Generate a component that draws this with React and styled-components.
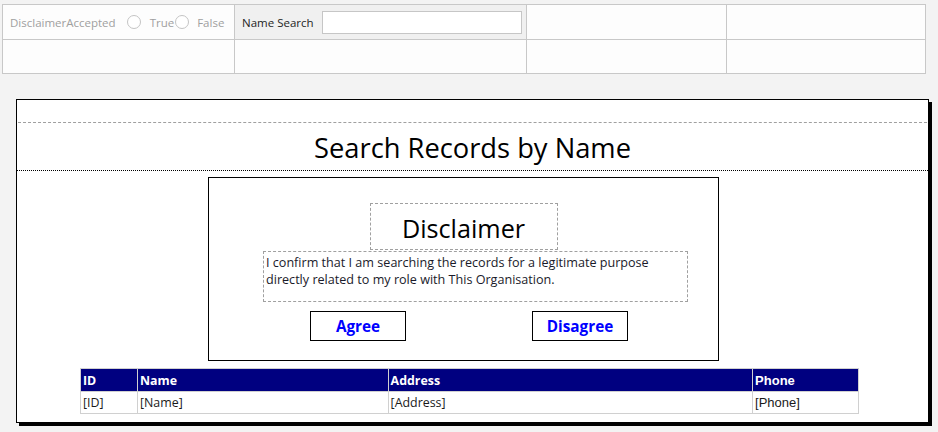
import React from 'react';
import styled, { createGlobalStyle } from 'styled-components';

const ui = '"Open Sans", "Noto Sans", sans-serif';
const arial = '"Liberation Sans", Arial, sans-serif';

const GlobalStyle = createGlobalStyle`
  html, body {
    margin: 0;
    padding: 0;
    background: #f3f3f3;
    font-family: ${ui};
  }
`;

const Page = styled.div`
  width: 938px;
  height: 432px;
  overflow: hidden;
  box-sizing: border-box;
  padding: 4px 0 0 2px;
`;

const FilterGrid = styled.div`
  display: grid;
  grid-template-columns: 232px 292px 200px 199px;
  grid-template-rows: 35px 34px;
  width: 924px;
  box-sizing: border-box;
  border-top: 1px solid #c8c8c8;
  border-left: 1px solid #c8c8c8;
  background: #fdfdfd;
`;

const Cell = styled.div`
  display: flex;
  align-items: center;
  box-sizing: border-box;
  white-space: nowrap;
  border-right: 1px solid #c8c8c8;
  border-bottom: 1px solid #c8c8c8;
  background: ${p => (p.$shaded ? '#f0f0f0' : '#fdfdfd')};
  padding: 0 7px;
  font-size: 11.5px;
  color: ${p => (p.$muted ? '#a0a0a0' : '#1e1e1e')};
`;

const RadioGroup = styled.div`
  display: flex;
  align-items: center;
  margin-left: 11px;
`;

const Radio = styled.span`
  display: inline-block;
  flex-shrink: 0;
  width: 12px;
  height: 12px;
  border: 1px solid #c4c4c4;
  border-radius: 50%;
  background: #fff;
  margin-right: ${p => p.$gap || 9}px;
`;

const RadioLabel = styled.span`
  margin-right: 1px;
`;

const SearchInput = styled.input`
  flex-shrink: 0;
  width: 200px;
  height: 23px;
  box-sizing: border-box;
  margin-left: 8px;
  border: 1px solid #c6c6c6;
  background: #fff;
  outline: none;
`;

const Panel = styled.div`
  margin: 25px 0 0 14px;
  width: 913px;
  height: 324px;
  box-sizing: border-box;
  background: #fff;
  border: 1px solid #000;
  box-shadow: 3px 3px 0 #000;
`;

const HeaderSpacer = styled.div`
  height: 22px;
  margin: 0 1px;
  border-bottom: 1px dashed #a0a0a0;
`;

const Title = styled.h1`
  margin: 0;
  height: 48px;
  display: flex;
  align-items: center;
  justify-content: center;
  font-weight: 400;
  font-size: 27.3px;
  color: #000;
  border-bottom: 1px dotted #000;
  padding-top: 1px;
  box-sizing: border-box;
`;

const DialogBox = styled.div`
  margin: 6px 0 0 191px;
  width: 511px;
  height: 184px;
  box-sizing: border-box;
  border: 1px solid #000;
  display: flex;
  flex-direction: column;
  padding-top: 25px;
`;

const DialogTitle = styled.div`
  align-self: center;
  width: 188px;
  height: 47px;
  box-sizing: border-box;
  border: 1px dashed #a0a0a0;
  display: flex;
  align-items: center;
  justify-content: center;
  font-size: 25.2px;
  color: #000;
  padding-top: 2px;
`;

const DialogText = styled.div`
  width: 425px;
  height: 51px;
  margin: 1px 0 0 54px;
  box-sizing: border-box;
  border: 1px dashed #a0a0a0;
  padding: 2px 2px;
  font-size: 12.6px;
  line-height: 17px;
  color: #1a1a2a;
`;

const ButtonRow = styled.div`
  display: flex;
  gap: 126px;
  margin: 9px 0 0 101px;
`;

const ActionButton = styled.button`
  width: 96px;
  height: 30px;
  box-sizing: border-box;
  border: 1px solid #000;
  background: #fff;
  color: #0000ff;
  font-family: ${ui};
  font-weight: 700;
  font-size: 15.3px;
  padding: 0;
  cursor: pointer;
`;

const Table = styled.table`
  margin: 7px 0 0 63px;
  width: 779px;
  border-collapse: collapse;
  font-size: 12.4px;
`;

const Th = styled.th`
  background: #000080;
  color: #fff;
  text-align: left;
  font-weight: 700;
  height: 22px;
  padding: 0 2px;
  border: 1px solid #d0d0d0;
  font-family: ${p => (p.$arial ? arial : ui)};
  font-size: ${p => (p.$arial ? '13px' : 'inherit')};
`;

const Td = styled.td`
  height: 21px;
  padding: 0 2px;
  color: #1a1a1a;
  border: 1px solid #d0d0d0;
  font-family: ${p => (p.$arial ? arial : ui)};
  font-size: ${p => (p.$arial ? '13px' : 'inherit')};
`;

export default function App() {
  return (
    <Page>
      <GlobalStyle />
      <FilterGrid>
        <Cell $muted>
          DisclaimerAccepted
          <RadioGroup>
            <Radio />
            <RadioLabel>True</RadioLabel>
            <Radio $gap={8} />
            <RadioLabel>False</RadioLabel>
          </RadioGroup>
        </Cell>
        <Cell $shaded>
          Name Search
          <SearchInput type="text" />
        </Cell>
        <Cell />
        <Cell />
        <Cell />
        <Cell />
        <Cell />
        <Cell />
      </FilterGrid>

      <Panel>
        <HeaderSpacer />
        <Title>Search Records by Name</Title>
        <DialogBox>
          <DialogTitle>Disclaimer</DialogTitle>
          <DialogText>
            I confirm that I am searching the records for a legitimate purpose
            directly related to my role with This Organisation.
          </DialogText>
          <ButtonRow>
            <ActionButton>Agree</ActionButton>
            <ActionButton>Disagree</ActionButton>
          </ButtonRow>
        </DialogBox>
        <Table>
          <colgroup>
            <col style={{ width: 57 }} />
            <col style={{ width: 251 }} />
            <col style={{ width: 365 }} />
            <col style={{ width: 106 }} />
          </colgroup>
          <thead>
            <tr>
              <Th>ID</Th>
              <Th>Name</Th>
              <Th>Address</Th>
              <Th $arial>Phone</Th>
            </tr>
          </thead>
          <tbody>
            <tr>
              <Td>[ID]</Td>
              <Td>[Name]</Td>
              <Td>[Address]</Td>
              <Td $arial>[Phone]</Td>
            </tr>
          </tbody>
        </Table>
      </Panel>
    </Page>
  );
}
